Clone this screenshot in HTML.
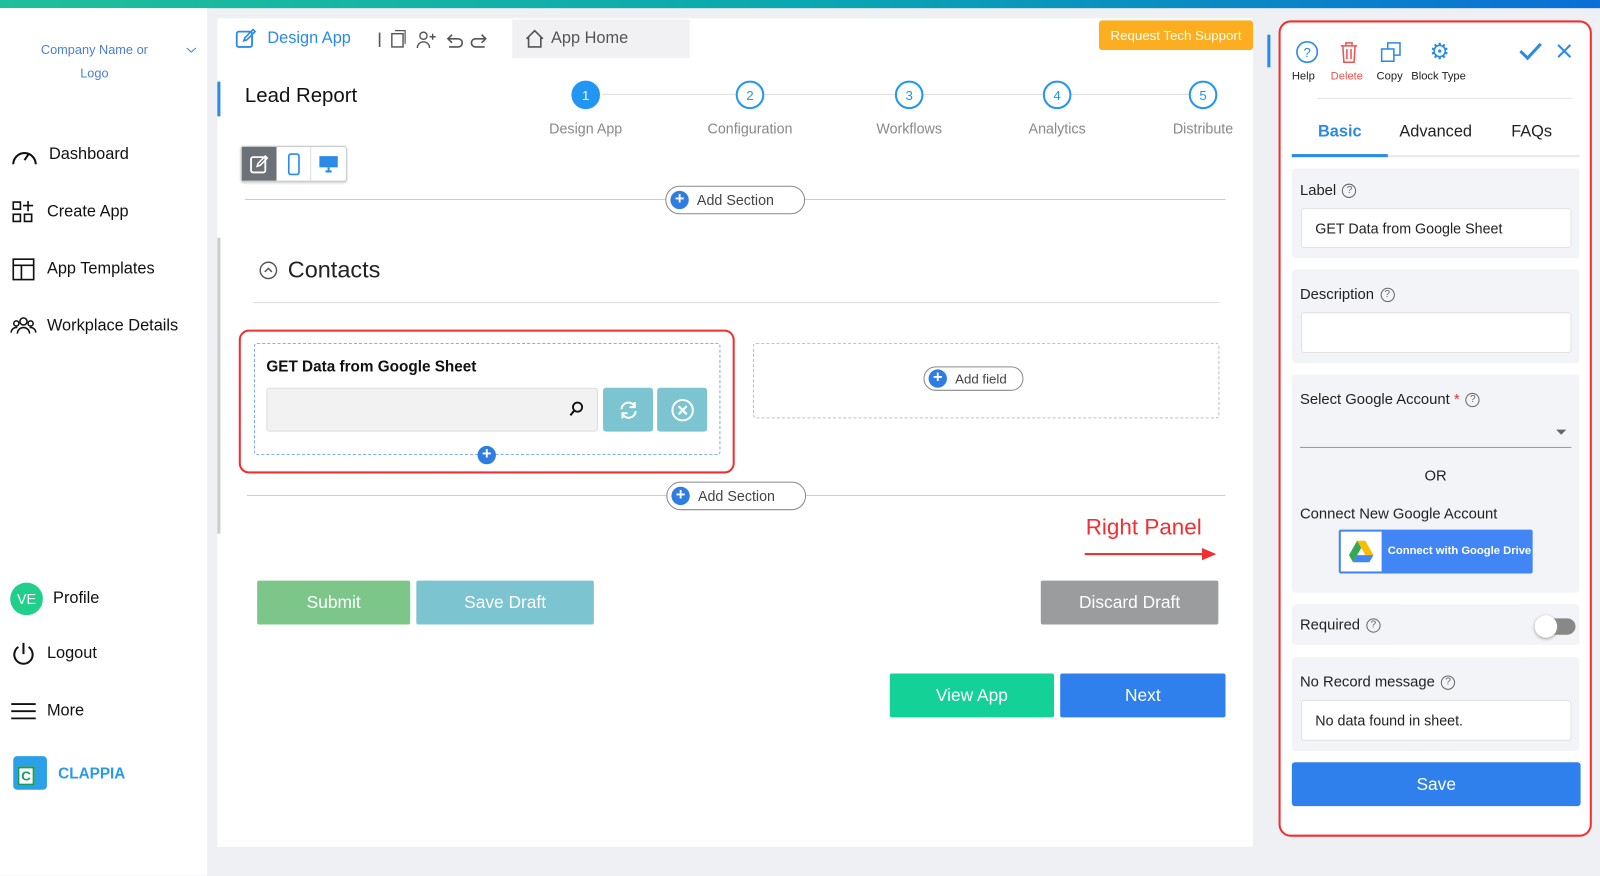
<!DOCTYPE html>
<html><head><style>
*{box-sizing:border-box;margin:0;padding:0}
html,body{width:1600px;height:870px;overflow:hidden;background:#eef0f4}
#w{position:absolute;left:0;top:0;width:1568px;height:853px;transform:scale(1.0204);transform-origin:0 0;font-family:"Liberation Sans",Arial,sans-serif;color:#222}
.a{position:absolute}
.top{left:0;top:0;width:1568px;height:8px;background:linear-gradient(90deg,#1fbf9a,#0aa8b0 50%,#0a6fd6)}
.side{left:0;top:8px;width:203px;height:850px;background:#fff}
.nav{left:10px;font-size:16px;color:#111;display:flex;align-items:center;gap:10px}
.main{left:213px;top:18px;width:1015px;height:812px;background:#fff}
.step{width:28px;height:28px;border-radius:50%;border:2px solid #2196f3;color:#2196f3;font-size:13px;display:flex;align-items:center;justify-content:center;background:#fff}
.slab{font-size:14px;color:#888;text-align:center;width:120px}
.pill{border:1.5px solid #888;border-radius:16px;background:#fff;display:flex;align-items:center;gap:8px;font-size:14px;color:#444;padding:0 12px 0 4px}
.plus{width:18px;height:18px;border-radius:50%;background:#2f7de1;color:#fff;font-weight:bold;font-size:16px;line-height:18px;text-align:center}
.btn{color:#fff;font-size:17px;display:flex;align-items:center;justify-content:center;border-radius:2px}
.panel{left:1253px;top:20px;width:307px;height:800px;border:2px solid #f03030;border-radius:12px;background:#fff}
.box{background:#f3f4f8;border-radius:4px}
.inp{background:#fff;border:1px solid #e2e2e2;border-radius:3px;font-size:14px;padding-left:13px;display:flex;align-items:center}
.lbl{font-size:14.5px;color:#222}
.q{display:inline-block;width:14px;height:14px;border:1.3px solid #666;border-radius:50%;font-size:10px;text-align:center;line-height:12px;color:#666;margin-left:6px;vertical-align:middle}
</style></head><body><div id="w">
<div class="a top"></div>
<div class="a side"></div>
<div class="a" style="left:30px;top:38px;width:125px;text-align:center;font-size:12.5px;color:#4a7fd6;line-height:23px">Company Name or<br>Logo</div>
<div class="a" style="left:182px;top:40px"><svg width="11" height="8"><path d="M1 2l4.5 4L10 2" fill="none" stroke="#4a7fd6" stroke-width="1"/></svg></div>
<div class="a nav" style="top:140px"><svg width="28" height="24" viewBox="0 0 28 24"><path d="M3 21A11 11 0 1 1 25 21" fill="none" stroke="#111" stroke-width="2"/><path d="M14 17L18 11" stroke="#111" stroke-width="2"/></svg>Dashboard</div>
<div class="a nav" style="top:196px"><svg width="26" height="24"><rect x="3" y="2" width="7" height="7" fill="none" stroke="#111" stroke-width="1.6"/><rect x="3" y="14" width="7" height="7" fill="none" stroke="#111" stroke-width="1.6"/><rect x="14" y="14" width="7" height="7" fill="none" stroke="#111" stroke-width="1.6"/><path d="M17.5 1v10M12.5 5.5h10" stroke="#111" stroke-width="1.6"/></svg>Create App</div>
<div class="a nav" style="top:252px"><svg width="26" height="24"><rect x="3" y="2" width="20" height="20" fill="none" stroke="#111" stroke-width="1.6"/><path d="M3 8h20M11 8v14" stroke="#111" stroke-width="1.6"/></svg>App Templates</div>
<div class="a nav" style="top:308px"><svg width="26" height="24"><circle cx="13" cy="7" r="3.5" fill="none" stroke="#111" stroke-width="1.5"/><circle cx="6" cy="9" r="2.5" fill="none" stroke="#111" stroke-width="1.5"/><circle cx="20" cy="9" r="2.5" fill="none" stroke="#111" stroke-width="1.5"/><path d="M7 19a6 6 0 0 1 12 0M1 18a5 5 0 0 1 6-5M25 18a5 5 0 0 0-6-5" fill="none" stroke="#111" stroke-width="1.5"/></svg>Workplace Details</div>
<div class="a nav" style="top:571px"><div style="width:32px;height:32px;border-radius:50%;background:#1fcf8a;color:#fff;font-size:14px;display:flex;align-items:center;justify-content:center">VE</div>Profile</div>
<div class="a nav" style="top:628px"><svg width="26" height="26"><path d="M8 6a9 9 0 1 0 10 0" fill="none" stroke="#111" stroke-width="2"/><path d="M13 2v11" stroke="#111" stroke-width="2"/></svg>Logout</div>
<div class="a nav" style="top:685px"><svg width="26" height="24"><path d="M1 5h24M1 12h24M1 19h24" stroke="#111" stroke-width="1.8"/></svg>More</div>
<div class="a" style="left:13px;top:741px;width:33px;height:33px;border-radius:4px;background:#2aa0e8"><div style="position:absolute;left:4px;top:10px;width:17px;height:19px;background:#fff;border:2px solid #1a9a5a;color:#1a9a5a;font-weight:bold;font-size:13px;text-align:center;line-height:15px">C</div></div>
<div class="a" style="left:57px;top:750px;font-weight:bold;font-size:15px;color:#2a9ae8">CLAPPIA</div>

<div class="a main"></div>
<div class="a" style="left:230px;top:27px;display:flex;align-items:center;gap:10px;font-size:16px;color:#2a8ae8"><svg width="22" height="22"><rect x="2" y="4" width="15" height="15" rx="2" fill="none" stroke="#2a8ae8" stroke-width="1.8"/><path d="M9 13l1-3 8-8 2 2-8 8z" fill="none" stroke="#2a8ae8" stroke-width="1.6"/></svg>Design App</div>
<div class="a" style="left:368px;top:28px"><svg width="112" height="22"><path d="M4 4v14" stroke="#555" stroke-width="1.6"/><rect x="16" y="5" width="11" height="13" fill="none" stroke="#555" stroke-width="1.4"/><path d="M19 2h10v13" fill="none" stroke="#555" stroke-width="1.2"/><circle cx="47" cy="7" r="3.5" fill="none" stroke="#555" stroke-width="1.4"/><path d="M41 19a6 6 0 0 1 12 0M53 8h6M56 5v6" fill="none" stroke="#555" stroke-width="1.4"/><path d="M72 10h9a4 4 0 0 1 0 8h-9M75 6l-4 4 4 4" fill="none" stroke="#555" stroke-width="1.6"/><path d="M107 10h-9a4 4 0 0 0 0 8h9M104 6l4 4-4 4" fill="none" stroke="#555" stroke-width="1.6"/></svg></div>
<div class="a" style="left:502px;top:19px;width:174px;height:38px;background:#f1f1f3;display:flex;align-items:center;gap:6px;padding-left:12px;font-size:16px;color:#555"><svg width="20" height="20"><path d="M2 10L10 2l8 8M4 8v10h12V8" fill="none" stroke="#555" stroke-width="1.6"/></svg>App Home</div>
<div class="a" style="left:1077px;top:20px;width:151px;height:29px;background:#fdae20;border-radius:3px;color:#fff;font-size:13px;display:flex;align-items:center;justify-content:center">Request Tech Support</div>
<div class="a" style="left:213px;top:80px;width:3px;height:34px;background:#2a8ae8"></div>
<div class="a" style="left:240px;top:83px;font-size:20px;color:#111">Lead Report</div>
<div class="a" style="left:590px;top:92px;width:590px;height:1px;background:#ddd"></div>
<div class="a step" style="left:560px;top:79px;background:#2196f3;color:#fff">1</div>
<div class="a step" style="left:721px;top:79px">2</div>
<div class="a step" style="left:877px;top:79px">3</div>
<div class="a step" style="left:1022px;top:79px">4</div>
<div class="a step" style="left:1165px;top:79px">5</div>
<div class="a slab" style="left:514px;top:118px">Design App</div>
<div class="a slab" style="left:675px;top:118px">Configuration</div>
<div class="a slab" style="left:831px;top:118px">Workflows</div>
<div class="a slab" style="left:976px;top:118px">Analytics</div>
<div class="a slab" style="left:1119px;top:118px">Distribute</div>
<div class="a" style="left:236px;top:143px;width:104px;height:35px;border:1px solid #ccc;border-radius:3px;display:flex;background:#fff;box-shadow:0 1px 2px #ccc">
<div style="width:34px;background:#6c7178;display:flex;align-items:center;justify-content:center"><svg width="20" height="20"><rect x="2" y="3" width="14" height="15" rx="2" fill="none" stroke="#fff" stroke-width="1.8"/><path d="M8 12l1-3 7-7 2 2-7 7z" fill="none" stroke="#fff" stroke-width="1.5"/></svg></div>
<div style="width:34px;border-right:1px solid #ddd;display:flex;align-items:center;justify-content:center"><svg width="12" height="22"><rect x="1" y="1" width="10" height="20" rx="2" fill="none" stroke="#2a8ae8" stroke-width="1.6"/></svg></div>
<div style="width:34px;display:flex;align-items:center;justify-content:center"><svg width="20" height="18"><rect x="1" y="1" width="18" height="11" fill="#2a8ae8"/><path d="M7 16h6M10 12v4" stroke="#2a8ae8" stroke-width="2"/></svg></div></div>
<div class="a" style="left:240px;top:195px;width:961px;height:1px;background:#ccc"></div>
<div class="a pill" style="left:652px;top:182px;height:28px;width:137px"><div class="plus">+</div>Add Section</div>
<div class="a" style="left:254px;top:256px"><svg width="18" height="18"><circle cx="9" cy="9" r="8" fill="none" stroke="#555" stroke-width="1.4"/><path d="M5.5 10.5L9 7l3.5 3.5" fill="none" stroke="#555" stroke-width="1.4"/></svg></div>
<div class="a" style="left:282px;top:251px;font-size:23px;color:#222">Contacts</div>
<div class="a" style="left:248px;top:296px;width:947px;height:1px;background:#ddd"></div>
<div class="a" style="left:234px;top:323px;width:486px;height:141px;border:2px solid #f03030;border-radius:10px"></div>
<div class="a" style="left:249px;top:336px;width:457px;height:110px;border:1.5px dashed #6fa4f0;border-radius:3px"></div>
<div class="a" style="left:261px;top:351px;font-size:15px;font-weight:bold;color:#111">GET Data from Google Sheet</div>
<div class="a" style="left:261px;top:380px;width:325px;height:43px;background:#f2f2f2;border:1px solid #ddd;border-radius:3px"></div>
<div class="a" style="left:557px;top:393px"><svg width="16" height="16"><circle cx="9" cy="6" r="4.5" fill="none" stroke="#111" stroke-width="1.8"/><path d="M6 9l-4 5" stroke="#111" stroke-width="2"/></svg></div>
<div class="a" style="left:591px;top:380px;width:49px;height:43px;background:#7bc4d0;border-radius:3px;display:flex;align-items:center;justify-content:center"><svg width="20" height="20"><path d="M3 9a7 7 0 0 1 13-3M17 11a7 7 0 0 1-13 3" fill="none" stroke="#fff" stroke-width="2"/><path d="M16 2v5h-5M4 18v-5h5" fill="none" stroke="#fff" stroke-width="2"/></svg></div>
<div class="a" style="left:644px;top:380px;width:49px;height:43px;background:#7bc4d0;border-radius:3px;display:flex;align-items:center;justify-content:center"><svg width="24" height="24"><circle cx="12" cy="12" r="10" fill="none" stroke="#fff" stroke-width="2"/><path d="M8 8l8 8M16 8l-8 8" stroke="#fff" stroke-width="2.2"/></svg></div>
<div class="a plus" style="left:468px;top:437px">+</div>
<div class="a" style="left:738px;top:336px;width:457px;height:74px;border:1.5px dashed #bbb;border-radius:3px"></div>
<div class="a pill" style="left:905px;top:359px;height:24px;width:98px;font-size:13px"><div class="plus">+</div>Add field</div>
<div class="a" style="left:242px;top:485px;width:959px;height:1px;background:#ccc"></div>
<div class="a pill" style="left:653px;top:472px;height:28px;width:137px"><div class="plus">+</div>Add Section</div>
<div class="a" style="left:1064px;top:504px;font-size:22px;color:#f03030">Right Panel</div>
<div class="a" style="left:1063px;top:542px;width:120px;height:2px;background:#f03030"></div>
<div class="a" style="left:1178px;top:537px;border-left:14px solid #f03030;border-top:6px solid transparent;border-bottom:6px solid transparent"></div>
<div class="a btn" style="left:252px;top:569px;width:150px;height:43px;background:#7cc68a">Submit</div>
<div class="a btn" style="left:408px;top:569px;width:174px;height:43px;background:#7cc4d0">Save Draft</div>
<div class="a btn" style="left:1020px;top:569px;width:174px;height:43px;background:#9a9c9e">Discard Draft</div>
<div class="a btn" style="left:872px;top:660px;width:161px;height:43px;background:#14d197">View App</div>
<div class="a btn" style="left:1039px;top:660px;width:162px;height:43px;background:#2f80ed">Next</div>
<div class="a" style="left:213px;top:233px;width:3px;height:290px;background:#ccc"></div>

<div class="a" style="left:1242px;top:34px;width:3px;height:32px;background:#2a8ae8"></div>
<div class="a panel"></div>
<div class="a" style="left:1270px;top:40px"><svg width="22" height="22"><circle cx="11" cy="11" r="10" fill="none" stroke="#2a8ae8" stroke-width="1.6"/><text x="11" y="16" text-anchor="middle" font-size="13" fill="#2a8ae8" font-family="Liberation Sans">?</text></svg></div>
<div class="a" style="left:1312px;top:40px"><svg width="20" height="22"><path d="M2 5h16M7 5V2h6v3M4 5l1 16h10l1-16M8 8v10M12 8v10" fill="none" stroke="#f05050" stroke-width="1.5"/></svg></div>
<div class="a" style="left:1353px;top:41px"><svg width="20" height="20"><rect x="1" y="7" width="12" height="12" fill="none" stroke="#2a8ae8" stroke-width="1.5"/><path d="M7 7V1h12v12h-6" fill="none" stroke="#2a8ae8" stroke-width="1.5"/></svg></div>
<div class="a" style="left:1401px;top:40px;font-size:22px;color:#2a8ae8;line-height:22px">⚙</div>
<div class="a" style="left:1266px;top:69px;font-size:11px">Help</div>
<div class="a" style="left:1304px;top:69px;font-size:11px;color:#f05050">Delete</div>
<div class="a" style="left:1349px;top:69px;font-size:11px">Copy</div>
<div class="a" style="left:1383px;top:69px;font-size:11px">Block Type</div>
<div class="a" style="left:1488px;top:40px"><svg width="24" height="20"><path d="M2 10l7 7L22 3" fill="none" stroke="#2a8ae8" stroke-width="3"/></svg></div>
<div class="a" style="left:1525px;top:42px"><svg width="16" height="16"><path d="M2 2l12 12M14 2L2 14" stroke="#2a8ae8" stroke-width="2"/></svg></div>
<div class="a" style="left:1291px;top:96px;width:250px;height:1px;background:#e5e5e5"></div>
<div class="a" style="left:1266px;top:121px;width:94px;text-align:center;font-size:16px;font-weight:bold;color:#2a8ae8">Basic</div>
<div class="a" style="left:1360px;top:121px;width:94px;text-align:center;font-size:16px">Advanced</div>
<div class="a" style="left:1454px;top:121px;width:94px;text-align:center;font-size:16px">FAQs</div>
<div class="a" style="left:1266px;top:152px;width:282px;height:2px;background:#e8e8e8"></div>
<div class="a" style="left:1266px;top:151px;width:94px;height:3px;background:#2a8ae8"></div>
<div class="a box" style="left:1266px;top:165px;width:282px;height:88px"></div>
<div class="a lbl" style="left:1274px;top:179px">Label<span class="q">?</span></div>
<div class="a inp" style="left:1275px;top:204px;width:265px;height:39px">GET Data from Google Sheet</div>
<div class="a box" style="left:1266px;top:264px;width:282px;height:92px"></div>
<div class="a lbl" style="left:1274px;top:281px">Description<span class="q">?</span></div>
<div class="a inp" style="left:1275px;top:306px;width:265px;height:40px"></div>
<div class="a box" style="left:1266px;top:367px;width:282px;height:214px"></div>
<div class="a lbl" style="left:1274px;top:384px">Select Google Account <span style="color:#f03030">*</span><span class="q">?</span></div>
<div class="a" style="left:1274px;top:438px;width:266px;height:1px;background:#999"></div>
<div class="a" style="left:1525px;top:421px;border-top:5px solid #666;border-left:5px solid transparent;border-right:5px solid transparent"></div>
<div class="a lbl" style="left:1396px;top:459px">OR</div>
<div class="a lbl" style="left:1274px;top:496px">Connect New Google Account</div>
<div class="a" style="left:1312px;top:519px;width:190px;height:43px;background:#4285f4;border-radius:2px"></div>
<div class="a" style="left:1314px;top:521px;width:40px;height:39px;background:#fff"><svg width="40" height="39" viewBox="0 0 40 39"><path d="M16 9h8l8 14h-8z" fill="#fbbc04"/><path d="M16 9l-8 14 4 7 8-14z" fill="#34a853"/><path d="M12 30h16l4-7H16z" fill="#4285f4"/></svg></div>
<div class="a" style="left:1360px;top:534px;font-size:11px;font-weight:bold;color:#fff">Connect with Google Drive</div>
<div class="a box" style="left:1266px;top:592px;width:282px;height:40px"></div>
<div class="a lbl" style="left:1274px;top:605px">Required<span class="q">?</span></div>
<div class="a" style="left:1508px;top:606px;width:36px;height:16px;border-radius:8px;background:#888"></div>
<div class="a" style="left:1504px;top:603px;width:22px;height:22px;border-radius:50%;background:#fff;box-shadow:0 1px 3px #999"></div>
<div class="a box" style="left:1266px;top:644px;width:282px;height:92px"></div>
<div class="a lbl" style="left:1274px;top:661px">No Record message<span class="q">?</span></div>
<div class="a inp" style="left:1275px;top:686px;width:265px;height:40px">No data found in sheet.</div>
<div class="a btn" style="left:1266px;top:747px;width:283px;height:43px;background:#2f80ed;border-radius:3px">Save</div>
</div></body></html>
